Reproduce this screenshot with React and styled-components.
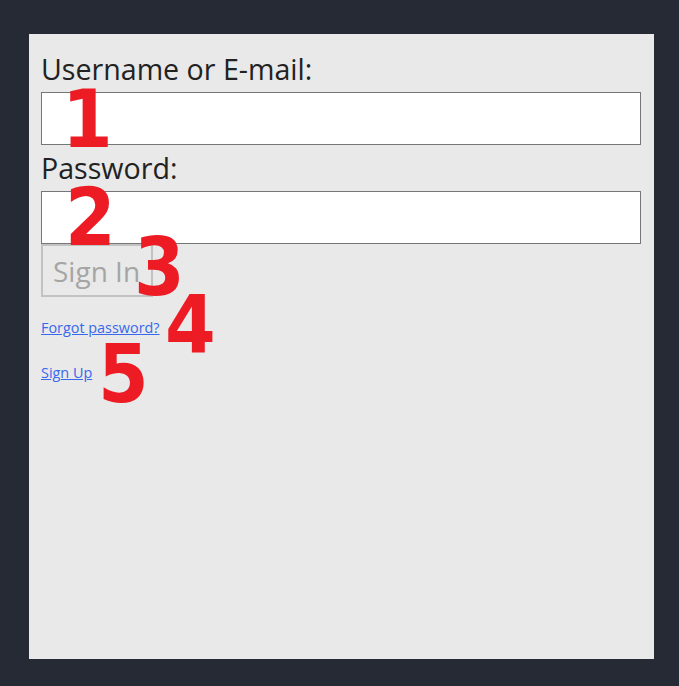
import React from 'react';
import styled, { createGlobalStyle } from 'styled-components';

const GlobalStyle = createGlobalStyle`
  *,*:before,*:after{box-sizing:border-box}
  html,body{margin:0;height:100%;background:#262a34}
  body{font-family:"Open Sans","Noto Sans",sans-serif}
`;

const Page = styled.div`
  padding: 34px 24px 27px 29px;
  width: 679px;
  height: 686px;
`;

const Panel = styled.form`
  position: relative;
  width: 625px;
  height: 625px;
  background: #e9e9e9;
  padding: 12px 13px 12px 12px;
  display: flex;
  flex-direction: column;
  align-items: flex-start;
`;

const Label = styled.label`
  display: block;
  font-size: 28.6px;
  line-height: 46px;
  height: 46px;
  color: #222;
`;

const Input = styled.input`
  display: block;
  width: 600px;
  height: 53px;
  border: 1px solid #767676;
  background: #fff;
  font-size: 20px;
  padding: 0 8px;
  margin: 0;
`;

const Button = styled.button`
  width: 112px;
  height: 53px;
  margin: 0;
  padding: 0 10px;
  border: 2px solid #c2c2c2;
  background: #e9e9e9;
  color: #a5a5a5;
  font-family: inherit;
  font-size: 28px;
  text-align: left;
  white-space: nowrap;
`;

const LinkRow = styled.p`
  margin: ${p => p.$top}px 0 0;
  font-size: 14.4px;
  line-height: 20px;
`;

const Link = styled.a`
  color: #3868ec;
  text-decoration: underline;
`;

const Marker = styled.span`
  position: absolute;
  left: ${p => p.$x}px;
  top: ${p => p.$y}px;
  font-family: "DejaVu Sans Condensed", "DejaVu Sans", sans-serif;
  font-stretch: condensed;
  font-weight: 700;
  font-size: 81px;
  line-height: 1;
  color: #ed1c24;
  pointer-events: none;
`;

export default function App() {
  return (
    <Page>
      <GlobalStyle />
      <Panel onSubmit={e => e.preventDefault()}>
        <Label htmlFor="user">Username or E-mail:</Label>
        <Input id="user" type="text" />
        <Label htmlFor="pass">Password:</Label>
        <Input id="pass" type="password" />
        <Button type="submit" disabled>Sign In</Button>
        <LinkRow $top={21}><Link href="#">Forgot password?</Link></LinkRow>
        <LinkRow $top={25}><Link href="#">Sign Up</Link></LinkRow>

        <Marker $x={33} $y={45}>1</Marker>
        <Marker $x={36} $y={143}>2</Marker>
        <Marker $x={105} $y={193}>3</Marker>
        <Marker $x={136} $y={251}>4</Marker>
        <Marker $x={69} $y={300}>5</Marker>
      </Panel>
    </Page>
  );
}
